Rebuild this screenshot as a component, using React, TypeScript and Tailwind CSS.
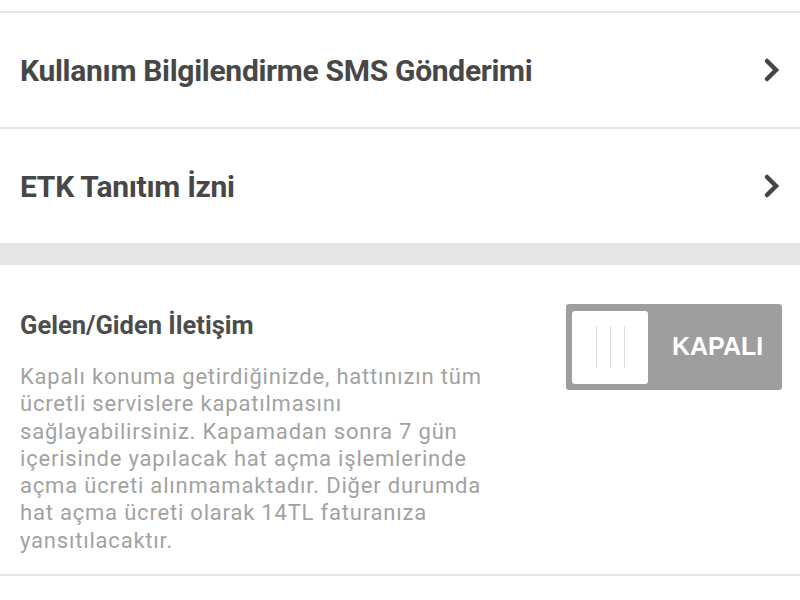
import React from "react";

function Chevron() {
  return (
    <svg width="20" height="26" viewBox="0 0 20 26" className="shrink-0">
      <path d="M5 4 L14 13 L5 22" fill="none" stroke="#454545" strokeWidth="4.5" strokeLinecap="round" strokeLinejoin="miter" />
    </svg>
  );
}

function Row({ label }: { label: string }) {
  return (
    <div className="flex items-center justify-between h-[116px] pl-[20px] pr-[18px] border-b-2 border-[#e4e4e4] bg-white">
      <span className="text-[30px] font-bold text-[#474747] tracking-[-0.3px]">{label}</span>
      <Chevron />
    </div>
  );
}

export default function App() {
  return (
    <div className="w-[800px] h-[600px] overflow-hidden bg-white" style={{ fontFamily: "Roboto, 'Noto Sans', sans-serif" }}>
      <div className="h-[13px] border-b-2 border-[#e4e4e4]" />
      <Row label="Kullanım Bilgilendirme SMS Gönderimi" />
      <Row label="ETK Tanıtım İzni" />
      <div className="h-[20px] bg-[#e6e6e6]" />
      <div className="flex justify-between pl-[20px] pr-[18px] pt-[39px] pb-[20px] border-b-2 border-[#e4e4e4]">
        <div className="w-[482px]">
          <div className="text-[25.5px] font-bold text-[#4d4d4d] leading-[40px] mt-[1px]">Gelen/Giden İletişim</div>
          <p className="mt-[18px] text-[22px] leading-[27.3px] text-[#a2a2a2] tracking-[0.8px]">
            Kapalı konuma getirdiğinizde, hattınızın tüm ücretli servislere kapatılmasını sağlayabilirsiniz. Kapamadan sonra 7 gün içerisinde yapılacak hat açma işlemlerinde açma ücreti alınmamaktadır. Diğer durumda hat açma ücreti olarak 14TL faturanıza yansıtılacaktır.
          </p>
        </div>
        <div className="w-[216px] h-[86px] bg-[#9e9e9e] rounded-[3px] flex items-center pl-[6px] shrink-0">
          <div className="w-[76px] h-[73px] bg-white rounded-[3px] flex items-center justify-center gap-[13px]">
            <div className="w-[1px] h-[42px] bg-[#dcdcdc]" />
            <div className="w-[1px] h-[42px] bg-[#dcdcdc]" />
            <div className="w-[1px] h-[42px] bg-[#dcdcdc]" />
          </div>
          <span className="ml-[24px] text-[25px] font-bold text-white" style={{ fontFamily: "'Liberation Sans', Arial, sans-serif" }}>KAPALI</span>
        </div>
      </div>
    </div>
  );
}
